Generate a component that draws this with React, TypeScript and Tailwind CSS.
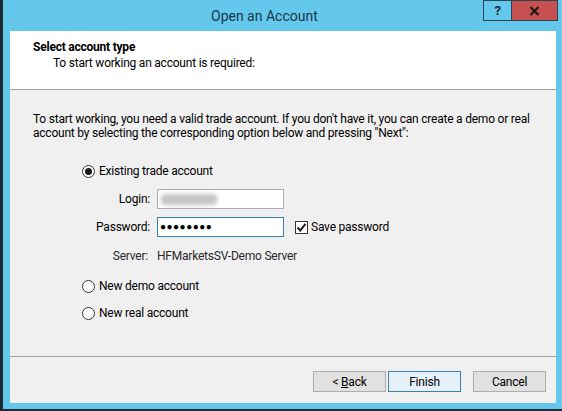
import React from "react";

const font = { fontFamily: "Roboto, 'Liberation Sans', sans-serif" };

function Radio({ checked = false, label }: { checked?: boolean; label: string }) {
  return (
    <div className="flex items-center h-[14px] pl-[72px]">
      <span className="w-[13px] h-[13px] rounded-full border border-[#333] bg-white flex items-center justify-center">
        {checked && <span className="w-[7px] h-[7px] rounded-full bg-[#1a1a1a]" />}
      </span>
      <span className="ml-[4px]">{label}</span>
    </div>
  );
}

function Button({ children, primary = false, className = "" }: { children: React.ReactNode; primary?: boolean; className?: string }) {
  return (
    <button
      type="button"
      className={
        "w-[73px] h-[21px] border text-[12px] text-black flex items-center justify-center " +
        (primary ? "bg-[#e5f1fb] border-[#3c7fb1] " : "bg-[#e1e1e1] border-[#adadad] ") +
        className
      }
    >
      {children}
    </button>
  );
}

export default function App() {
  return (
    <div
      className="w-[562px] h-[411px] bg-[#63c8ec] border-l-[3px] border-b-2 border-[#1c2b36] flex flex-col text-[12px] tracking-[-0.22px] text-black"
      style={font}
    >
      {/* title bar */}
      <div className="h-[31px] flex items-start shrink-0">
        <span className="ml-[208px] mt-[6px] text-[14px] tracking-normal leading-[20px] text-[#1d3546]">Open an Account</span>
        <div className="flex-1" />
        <div className="flex mr-[4px]">
          <div className="w-[29px] h-[21px] border border-[#2d4350] flex items-center justify-center text-[13px] font-bold text-[#1c2b36]">
            ?
          </div>
          <div className="w-[46px] h-[21px] border border-l-0 border-[#2d4350] bg-[#c75050] flex items-center justify-center">
            <svg width="11" height="10" viewBox="0 0 11 10">
              <path d="M1.5 1 L9.5 9 M9.5 1 L1.5 9" stroke="#1a1a1a" strokeWidth="2.2" />
            </svg>
          </div>
        </div>
      </div>

      {/* client */}
      <div className="ml-[7px] w-[546px] h-[372px] flex flex-col">
        <div className="h-[59px] shrink-0 bg-white border-b border-[#a0a0a0] pt-[9px] pl-[23px] leading-[15px]">
          <div className="font-bold">Select account type</div>
          <div className="pl-[20px] mt-[1px]">To start working an account is required:</div>
        </div>

        <div className="flex-1 bg-[#f0f0f0] flex flex-col">
          <p className="pl-[23px] pt-[22px] leading-[14px]">
            To start working, you need a valid trade account. If you don't have it, you can create a demo or real
            <br />
            account by selecting the corresponding option below and pressing "Next":
          </p>

          <div className="mt-[24px]">
            <Radio checked label="Existing trade account" />
          </div>

          <div className="mt-[11px] flex items-center">
            <span className="w-[140px] text-right">Login:</span>
            <div className="ml-[7px] w-[127px] h-[20px] bg-white border border-[#abadb3] flex items-center pl-[3px]">
              <div className="w-[56px] h-[11px] bg-[#c4c4c4] blur-[2px] rounded-sm" />
            </div>
          </div>

          <div className="mt-[8px] flex items-center">
            <span className="w-[140px] text-right">Password:</span>
            <div className="ml-[7px] w-[127px] h-[20px] bg-white border border-[#3c7fb1] flex items-center pl-[2px] text-[10px] tracking-[0.5px] leading-none">
              ●●●●●●●●
            </div>
            <span className="ml-[11px] w-[13px] h-[13px] border border-[#333] bg-white flex items-center justify-center">
              <svg width="11" height="11" viewBox="0 0 11 11">
                <path d="M1.5 5.5 L4.3 8.5 L9.5 1.8" stroke="#1a1a1a" strokeWidth="2" fill="none" />
              </svg>
            </span>
            <span className="ml-[3px]">Save password</span>
          </div>

          <div className="mt-[12px] flex items-center h-[14px]">
            <span className="w-[138px] text-right text-[#2a2a2a]">Server:</span>
            <span className="ml-[9px] text-[#2a2a2a]">HFMarketsSV-Demo Server</span>
          </div>

          <div className="mt-[16px]">
            <Radio label="New demo account" />
          </div>
          <div className="mt-[13px]">
            <Radio label="New real account" />
          </div>

          <div className="flex-1" />

          <div className="border-t border-[#a0a0a0] h-[47px] shrink-0 pt-[14px] pr-[10px] flex justify-end items-start">
            <Button>
              &lt;&nbsp;<span className="underline">B</span>ack
            </Button>
            <Button primary className="ml-[2px]">
              Finish
            </Button>
            <Button className="ml-[12px]">Cancel</Button>
          </div>
        </div>
      </div>
    </div>
  );
}
